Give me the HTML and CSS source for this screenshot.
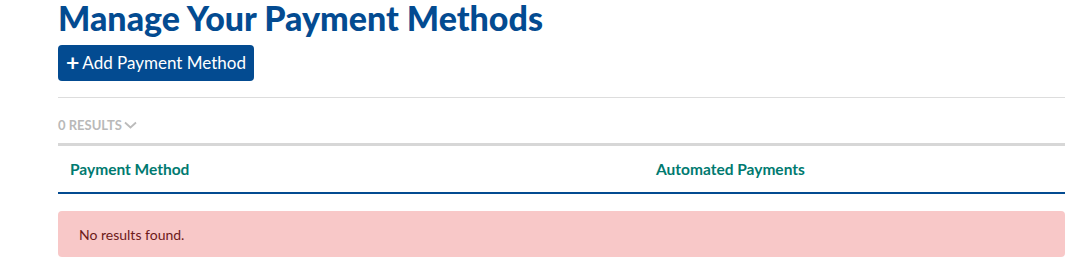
FILE: index.html
```html
<!DOCTYPE html>
<html lang="en">
<head>
  <meta charset="UTF-8">
  <title>Payment Methods</title>
  <link rel="stylesheet" href="styles.css">
</head>
<body>
  <div class="container">
    <h1>Manage Your Payment Methods</h1>
    <button class="add-button"><span class="plus">+</span>Add Payment Method</button>
    <hr class="divider">
    <div class="results">0 RESULTS
      <svg class="chevron" width="13" height="8" viewBox="0 0 13 8"><path d="M1 1.5l5.5 5 5.5-5" fill="none" stroke="#bbb" stroke-width="1.8"/></svg>
    </div>
    <div class="table-head">
      <div class="col col-method">Payment Method</div>
      <div class="col col-auto">Automated Payments</div>
    </div>
    <div class="alert">No results found.</div>
  </div>
</body>
</html>
```

FILE: styles.css
```css
body {
  font-family: Lato, "Open Sans", sans-serif;
  background-color: #fff;
  margin: 0;
  padding: 0;
}

.container {
  margin: 0 11px 0 58px;
}

h1 {
  margin: 0;
  font-size: 34px;
  font-weight: 900;
  line-height: 36px;
  color: #034b91;
}

.add-button {
  display: flex;
  align-items: center;
  margin-top: 9px;
  height: 36px;
  padding: 0 8px;
  background-color: #034b91;
  color: #fff;
  border: none;
  border-radius: 4px;
  font-family: Lato, sans-serif;
  font-size: 17px;
  line-height: 20px;
}

.plus {
  font-size: 23px;
  font-weight: 700;
  margin-right: 3px;
  position: relative;
  top: -1px;
}

.divider {
  border: none;
  border-top: 1px solid #ddd;
  margin: 16px 0 0 0;
}

.results {
  display: flex;
  align-items: center;
  box-sizing: border-box;
  height: 45px;
  padding-top: 8px;
  font-size: 13px;
  font-weight: 700;
  color: #b9b9b9;
}

.chevron {
  margin-left: 2px;
}

.table-head {
  display: flex;
  border-top: 3px solid #d7d7d7;
  border-bottom: 2px solid #034b91;
  height: 46px;
  align-items: center;
}

.col {
  font-size: 15.5px;
  font-weight: 700;
  color: #007a70;
}

.col-method {
  width: 586px;
  padding-left: 12px;
  box-sizing: border-box;
}

.col-auto {
  padding-left: 12px;
}

.alert {
  margin-top: 17px;
  height: 46px;
  display: flex;
  align-items: center;
  padding-left: 21px;
  background-color: #f8c8c8;
  border-radius: 4px;
  font-size: 14px;
  color: #6e1a1a;
}
```
